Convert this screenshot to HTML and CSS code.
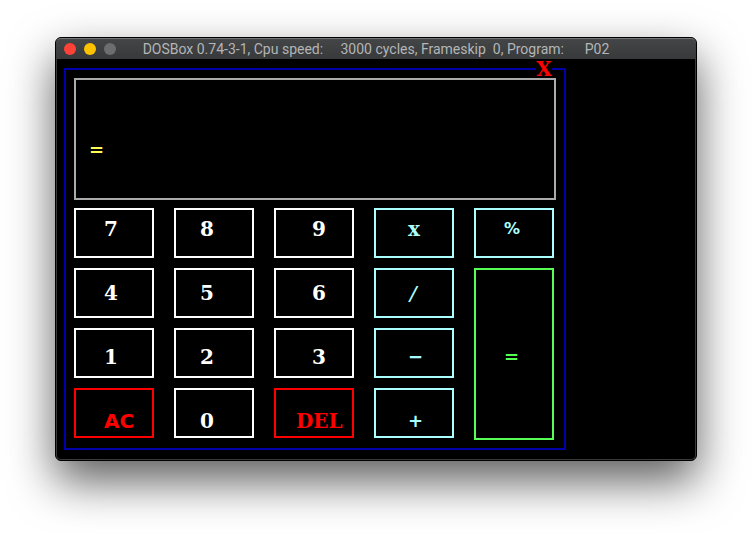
FILE: index.html
```html
<!DOCTYPE html>
<html lang="en">
<head>
<meta charset="utf-8">
<meta name="viewport" content="width=device-width, initial-scale=1">
<title>DOSBox</title>
<link rel="stylesheet" href="styles.css">
</head>
<body>
<main class="window">
  <header class="titlebar">
    <div class="lights">
      <button class="light close" type="button" aria-label="Close window"></button>
      <button class="light minimize" type="button" aria-label="Minimize window"></button>
      <button class="light zoom" type="button" aria-label="Zoom window" disabled></button>
    </div>
    <h1 class="title">DOSBox 0.74-3-1, Cpu speed:     3000 cycles, Frameskip  0, Program:      P02</h1>
  </header>
  <div class="screen">
    <section class="calculator" aria-label="Calculator">
      <button class="exit" type="button">X</button>
      <output class="display"><span class="symbol">=</span></output>
      <div class="keys">
        <button class="key row1 col1" type="button">7</button>
        <button class="key row1 col2" type="button">8</button>
        <button class="key row1 col3" type="button">9</button>
        <button class="key row1 col4 operator" type="button">x</button>
        <button class="key row1 col5 operator percent" type="button">%</button>
        <button class="key row2 col1" type="button">4</button>
        <button class="key row2 col2" type="button">5</button>
        <button class="key row2 col3" type="button">6</button>
        <button class="key row2 col4 operator slash" type="button">/</button>
        <button class="key equals col5 symbol" type="button">=</button>
        <button class="key row3 col1" type="button">1</button>
        <button class="key row3 col2" type="button">2</button>
        <button class="key row3 col3" type="button">3</button>
        <button class="key row3 col4 operator symbol" type="button">−</button>
        <button class="key row4 col1 command sans" type="button">AC</button>
        <button class="key row4 col2" type="button">0</button>
        <button class="key row4 col3 command delete" type="button">DEL</button>
        <button class="key row4 col4 operator symbol" type="button">+</button>
      </div>
    </section>
  </div>
</main>
</body>
</html>
```
FILE: styles.css
```css
* {
  box-sizing: border-box;
}

body {
  min-height: 100vh;
  margin: 0;
  padding: 37px 55px;
  background: #fff;
}

button {
  margin: 0;
  padding: 0;
  border: 0;
  background: none;
}

.window {
  border: 1px solid #000;
  border-radius: 6px;
  background: #000;
  box-shadow: 0 20px 46px rgba(0, 0, 0, 0.64);
}

.titlebar {
  position: relative;
  display: flex;
  align-items: center;
  justify-content: center;
  height: 21px;
  border-top: 1px solid #757678;
  border-radius: 5px 5px 0 0;
  background: linear-gradient(#434547, #37393b);
}

.lights {
  position: absolute;
  left: 8px;
  display: flex;
  gap: 8px;
}

.light {
  width: 12px;
  height: 12px;
  border-radius: 50%;
}

.close {
  background: #ff4238;
}

.minimize {
  background: #ffc200;
}

.zoom {
  background: #6b6d6e;
}

.title {
  margin: 0;
  color: #b4b5b6;
  font: 400 14px/20px Roboto, sans-serif;
  white-space: pre;
}

.screen {
  padding: 9px 7px;
  border: 1px solid #3a3a3a;
  border-top: 0;
  border-radius: 0 0 5px 5px;
}

.calculator {
  position: relative;
  width: fit-content;
  padding: 8px 8px 10px;
  border: 2px solid #0000aa;
  font: 700 20px/14px "DejaVu Serif", serif;
}

.exit {
  position: absolute;
  top: -8px;
  right: 12px;
  width: 16px;
  height: 14px;
  background: #000;
  color: #f00;
  font: inherit;
}

.display {
  display: block;
  min-height: 122px;
  margin-bottom: 8px;
  padding: 62px 13px 0;
  border: 2px solid #aaa;
  color: #ffff55;
}

.keys {
  display: grid;
  grid-template-columns: repeat(5, 80px);
  grid-auto-rows: 50px;
  gap: 10px 20px;
  padding-right: 2px;
}

.key {
  display: flex;
  align-items: flex-start;
  border: 2px solid;
  color: #fff;
  font: inherit;
}

.row1 { padding-top: 12px; }
.row2 { padding-top: 16px; }
.row3 { padding-top: 20px; }
.row4 { padding-top: 24px; }

.col1 { padding-left: 28px; }
.col2 { padding-left: 24px; }
.col3 { padding-left: 36px; }
.col4 { padding-left: 32px; }
.col5 { padding-left: 28px; }

.operator {
  color: #aaffff;
}

.command {
  color: #f00;
}

.delete {
  padding-left: 20px;
}

.sans {
  font-family: "DejaVu Sans", sans-serif;
}

.symbol {
  font: 700 18px/14px "DejaVu Sans", sans-serif;
}

.percent {
  font: 700 16px/14px "DejaVu Sans", sans-serif;
}

.slash {
  font: italic 400 20px/14px "DejaVu Sans Mono", monospace;
}

.equals {
  grid-row: 2 / span 3;
  grid-column: 5;
  margin-bottom: -2px;
  padding-top: 80px;
  color: #55ff55;
}
```
